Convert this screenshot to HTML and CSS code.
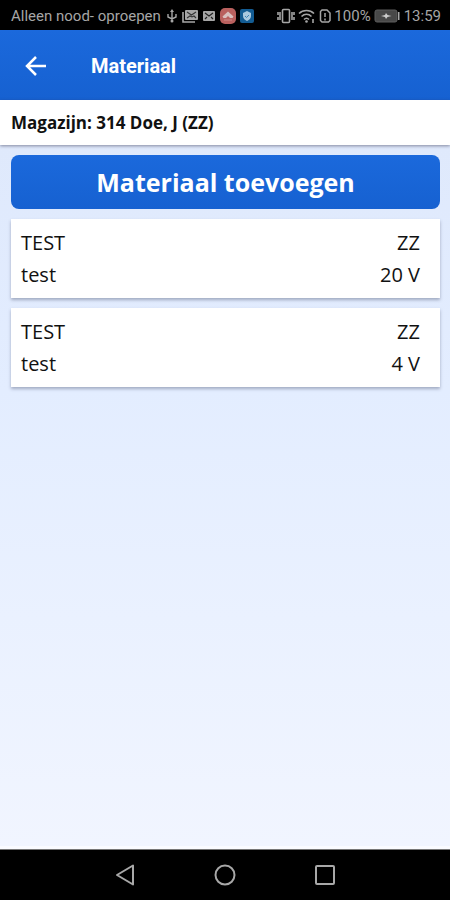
FILE: index.html
```html
<!DOCTYPE html>
<html lang="nl">
<head>
    <meta charset="UTF-8">
    <meta name="viewport" content="width=device-width, initial-scale=1.0">
    <title>Materiaal</title>
    <link rel="stylesheet" href="styles.css">
</head>
<body>
    <div class="statusbar">
        <span class="carrier">Alleen nood- oproepen</span>
        <div class="status-icons">
            <svg width="12" height="16" viewBox="0 0 12 16" fill="none" stroke="#a6a6a6" stroke-width="1.4">
                <path d="M6 3v10M2 6v3l4 2 4-2V6"/>
                <path d="M6 1l2 3H4z" fill="#a6a6a6" stroke="none"/>
                <circle cx="6" cy="13" r="1.5" fill="#a6a6a6" stroke="none"/>
            </svg>
            <svg width="16" height="14" viewBox="0 0 16 14">
                <path d="M1 3v10h12" fill="none" stroke="#a6a6a6" stroke-width="1.6"/>
                <rect x="3" y="1" width="13" height="10" rx="1" fill="#a6a6a6"/>
                <path d="M5 3l4.500 3L14 3M5 9l3-2 2 1 2-1 2 2" fill="none" stroke="#333" stroke-width="1.1"/>
            </svg>
            <svg width="14" height="14" viewBox="0 0 14 14">
                <rect x="1" y="2" width="12" height="10" rx="1" fill="#a6a6a6"/>
                <path d="M3 4l4 3 4-3M3 10l2-2M11 10L9 8" fill="none" stroke="#222" stroke-width="1.2"/>
            </svg>
            <svg width="16" height="16" viewBox="0 0 16 16">
                <rect width="16" height="16" rx="5" fill="#b9605e"/>
                <path d="M2.500 8.500L8 3.500l5.500 5-1 1.500H10L8 8l-2 2H3.500z" fill="#d9c0bf"/>
                <path d="M4 12h8" stroke="#cf8c8a"/>
            </svg>
            <svg width="14" height="14" viewBox="0 0 14 14">
                <rect width="14" height="14" rx="2" fill="#135c93"/>
                <path d="M7 2l4 2v3c0 2-1.500 4-4 5-2.500-1-4-3-4-5V4z" fill="#a9c9df"/>
                <path d="M5 7l1.500 1.500L9 6" fill="none" stroke="#3b82b3"/>
            </svg>
        </div>
        <div class="status-right">
            <svg width="18" height="16" viewBox="0 0 18 16" fill="none" stroke="#a6a6a6" stroke-width="1.600">
                <rect x="5.500" y="1.500" width="7" height="13" rx="1"/>
                <path d="M3 4v8M15 4v8M1 4v3M1 9v3M17 4v3M17 9v3"/>
            </svg>
            <svg width="18" height="16" viewBox="0 0 18 16" fill="none" stroke="#a6a6a6" stroke-width="1.600">
                <path d="M1 5.500c4-4 11-4 15 0M3.500 8.500c3-3 7-3 10 0M6 11.500c1.500-1.500 3.500-1.500 5 0"/>
                <circle cx="8.500" cy="13.500" r="1.300" fill="#a6a6a6" stroke="none"/>
                <path d="M15 11v4"/>
            </svg>
            <svg width="12" height="16" viewBox="0 0 12 16" fill="none" stroke="#a6a6a6" stroke-width="1.500">
                <path d="M3 2h5l3 3v7.500l-1.500 1.500H3L1.500 12.500V3.500z"/>
                <path d="M6 5v4M6 10.500v2"/>
            </svg>
            <span class="percent">100%</span>
            <svg class="battery" width="27" height="14" viewBox="0 0 27 14">
                <rect x="1" y="1" width="22" height="12" rx="2" fill="#484848" stroke="#5c5c5c"/>
                <path d="M24 3h1.500v8H24z" fill="#a6a6a6"/>
                <path d="M7 7l4-1 1-2 1.500 2 4 1-4 1L12 10l-1-2z" fill="#ccc"/>
            </svg>
            <span>13:59</span>
        </div>
    </div>

    <header class="header">
        <button type="button" class="back" aria-label="Terug">
            <svg width="24" height="24" viewBox="0 0 24 24" fill="none" stroke="#fff" stroke-width="2.500">
                <path d="M22 12H3M12 3l-9 9 9 9"/>
            </svg>
        </button>
        <h1>Materiaal</h1>
    </header>

    <h2 class="magazijn">Magazijn: 314 Doe, J (ZZ)</h2>

    <main class="content">
        <button type="button" class="add-button">Materiaal toevoegen</button>
        <div class="card">
            <div class="row"><span>TEST</span><span>ZZ</span></div>
            <div class="row"><span>test</span><span>20 V</span></div>
        </div>
        <div class="card">
            <div class="row"><span>TEST</span><span>ZZ</span></div>
            <div class="row"><span>test</span><span>4 V</span></div>
        </div>
    </main>

    <nav class="navbar">
        <button type="button" aria-label="Vorige">
            <svg width="24" height="24" viewBox="0 0 24 24" fill="none" stroke="#a8a8a8" stroke-width="2" stroke-linejoin="round">
                <path d="M20 2.500v19L4 12z"/>
            </svg>
        </button>
        <button type="button" aria-label="Start">
            <svg width="24" height="24" viewBox="0 0 24 24" fill="none" stroke="#a8a8a8" stroke-width="2">
                <circle cx="12" cy="12" r="9.500"/>
            </svg>
        </button>
        <button type="button" aria-label="Recente apps">
            <svg width="24" height="24" viewBox="0 0 24 24" fill="none" stroke="#a8a8a8" stroke-width="2">
                <rect x="3" y="3" width="18" height="18" rx="1"/>
            </svg>
        </button>
    </nav>
</body>
</html>
```
FILE: styles.css
```css
* {
    box-sizing: border-box;
}
body {
    margin: 0;
    min-height: 100vh;
    display: flex;
    flex-direction: column;
    font-family: "Open Sans", "Noto Sans", sans-serif;
    color: #111;
    background-color: #fff;
}
button {
    border: none;
    padding: 0;
    background: none;
    cursor: pointer;
}
svg {
    display: block;
    flex-shrink: 0;
}
.statusbar {
    display: flex;
    align-items: center;
    height: 30px;
    padding: 2px 9px 0 11px;
    background-color: #000;
    color: #a6a6a6;
    font-family: Roboto, sans-serif;
    font-size: 15px;
    white-space: nowrap;
}
.status-icons {
    display: flex;
    align-items: center;
    gap: 4px;
    margin-left: 5px;
}
.status-right {
    display: flex;
    align-items: center;
    gap: 3px;
    margin-left: auto;
}
.header {
    display: flex;
    align-items: center;
    height: 70px;
    padding: 2px 24px 0;
    background: linear-gradient(#1b69dc, #1661d1);
    color: #fff;
}
.header h1 {
    margin: 0 0 0 43px;
    font-family: Roboto, sans-serif;
    font-size: 20px;
    font-weight: 700;
}
.magazijn {
    position: relative;
    margin: 0;
    padding: 10px 11px;
    font-size: 17px;
    line-height: 25px;
    font-weight: 700;
    background-color: #fff;
    box-shadow: 0 1px 3px rgba(40, 40, 70, 0.5);
}
.content {
    flex: 1;
    display: flex;
    flex-direction: column;
    gap: 10px;
    padding: 10px 10px 10px 11px;
    background: linear-gradient(#dfe9fc, #e3edff 35%, #f1f5ff);
    border-bottom: 3px solid #fafbff;
}
.add-button {
    height: 54px;
    border-radius: 8px;
    background: linear-gradient(#1b69dc, #1661d1);
    color: #fff;
    font-family: inherit;
    font-size: 25px;
    font-weight: 700;
}
.card {
    padding: 8px 20px 7px 10px;
    background-color: #fff;
    box-shadow: 0 2px 3px rgba(40, 50, 80, 0.35);
}
.row {
    display: flex;
    justify-content: space-between;
    font-size: 20px;
    line-height: 32px;
}
.navbar {
    display: flex;
    justify-content: center;
    align-items: center;
    gap: 76px;
    height: 51px;
    background-color: #000;
    border-top: 1px solid #777;
}
```
